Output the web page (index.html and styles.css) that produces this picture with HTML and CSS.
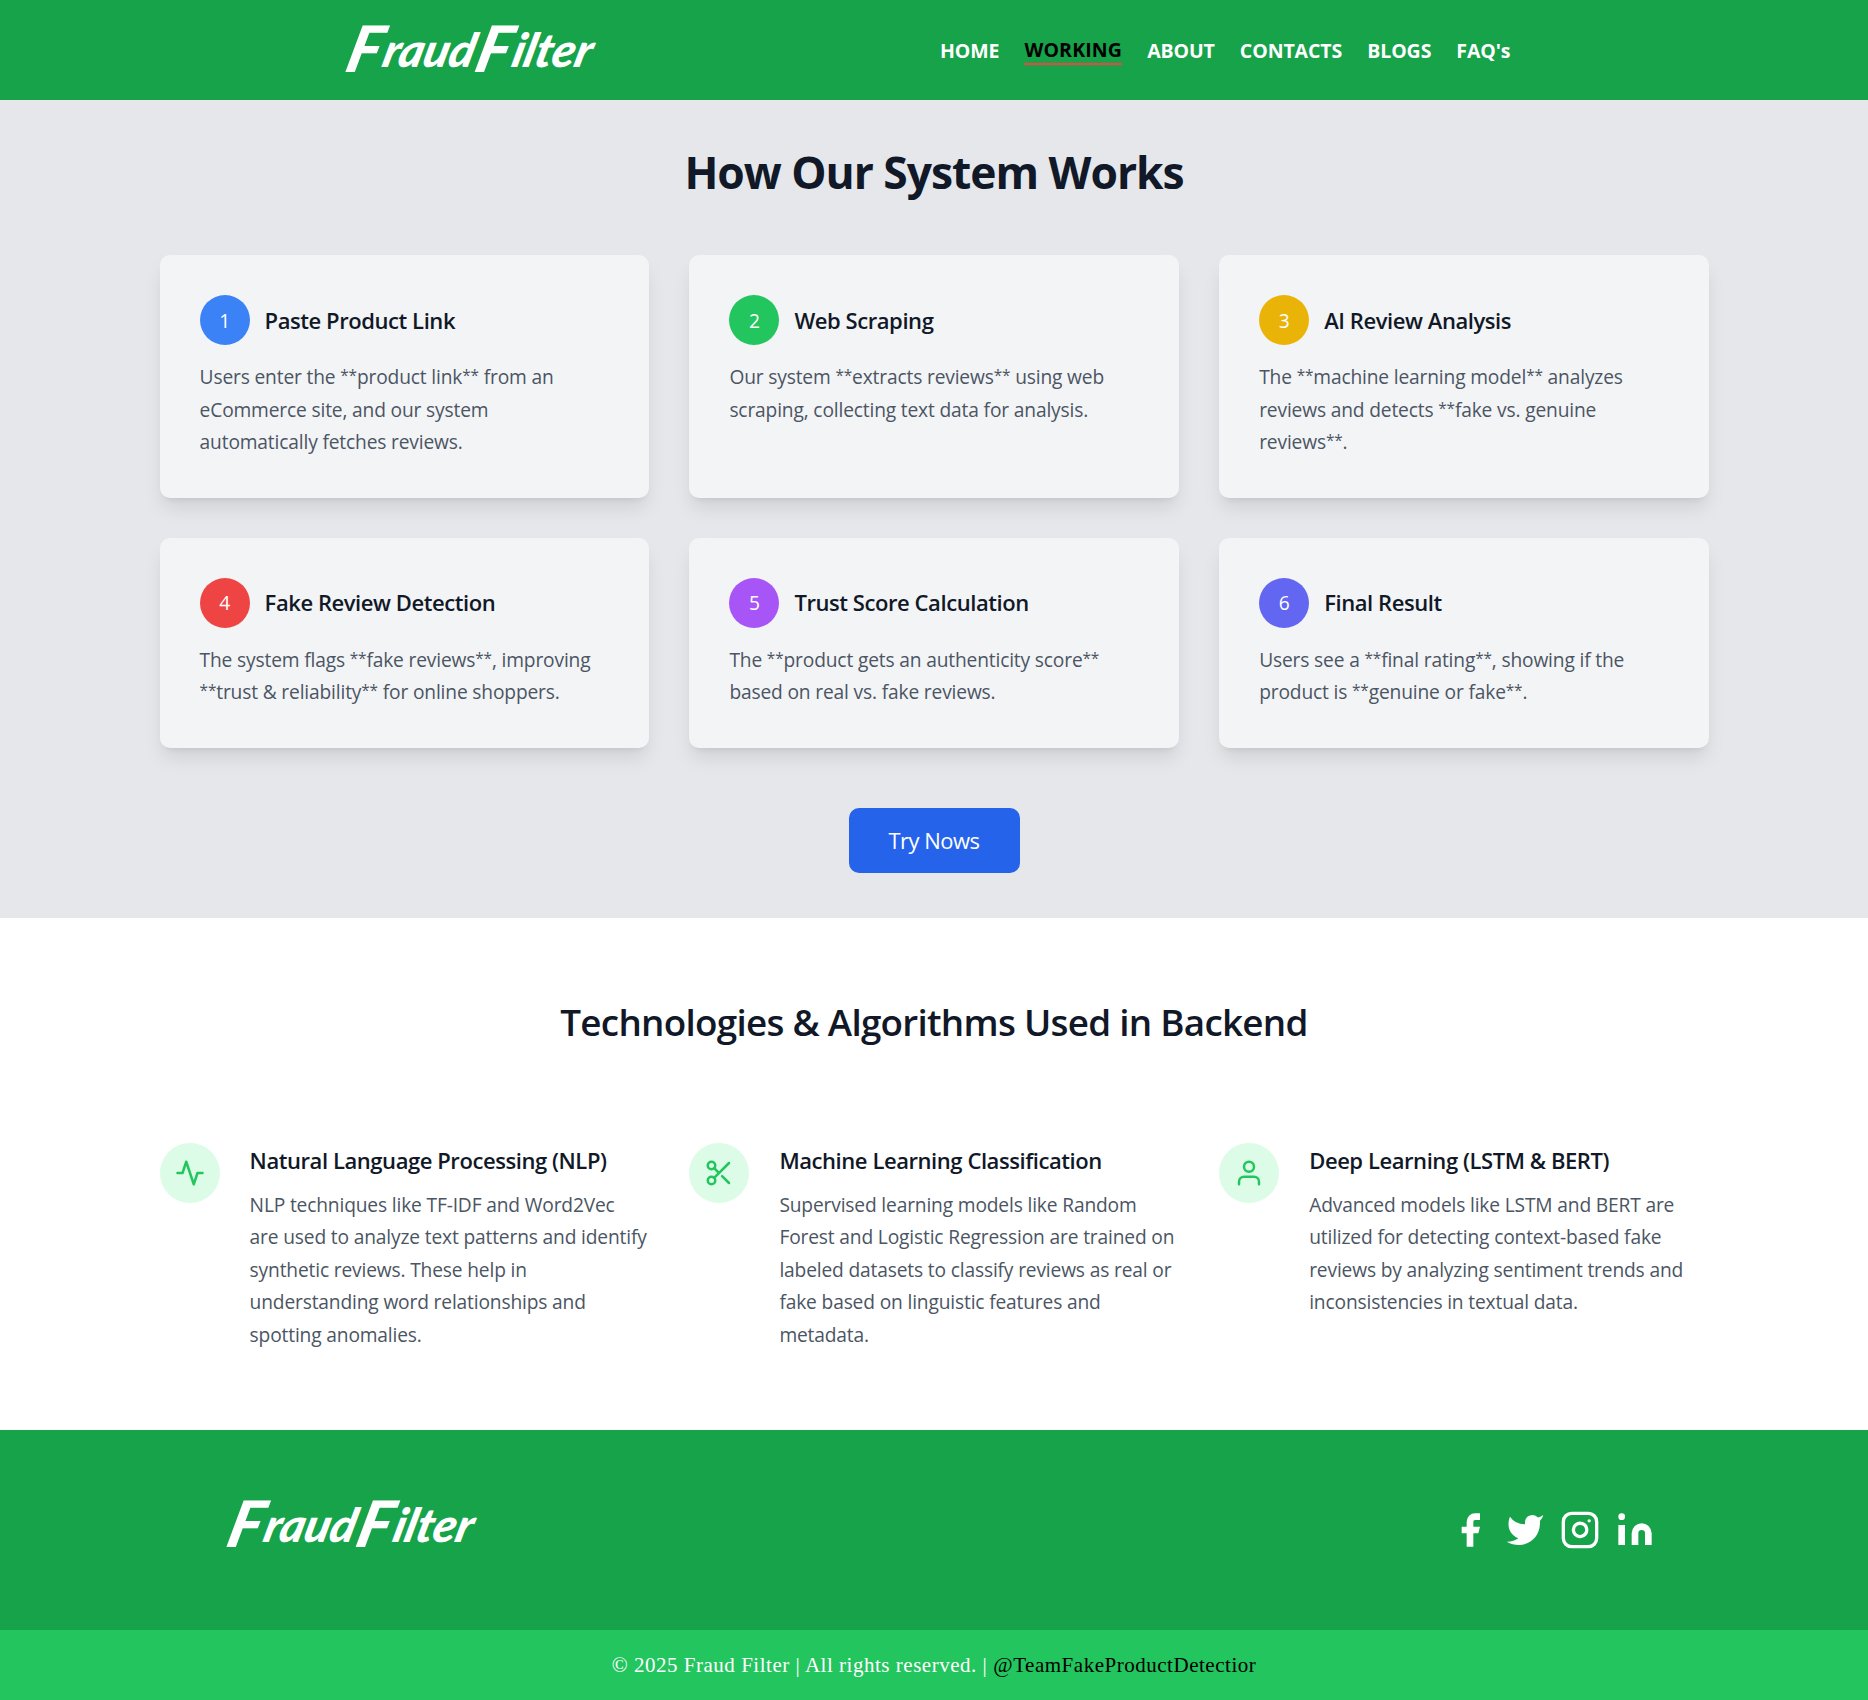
FILE: index.html
```html
<!DOCTYPE html>
<html lang="en">
<head>
<meta charset="utf-8">
<title>Fraud Filter</title>
<link rel="stylesheet" href="styles.css">
</head>
<body>
<header class="header">
  <a class="logo"><span class="cap">F</span>raud<span class="cap second">F</span>ilter</a>
  <nav class="nav">
    <a>HOME</a>
    <a class="active">WORKING</a>
    <a>ABOUT</a>
    <a>CONTACTS</a>
    <a>BLOGS</a>
    <a>FAQ's</a>
  </nav>
</header>

<section class="works">
  <h1>How Our System Works</h1>
  <div class="grid">
    <article class="card">
      <div class="card-head"><span class="num blue">1</span><h2>Paste Product Link</h2></div>
      <p>Users enter the <i>**</i>product link<i>**</i> from an<br>eCommerce site, and our system<br>automatically fetches reviews.</p>
    </article>
    <article class="card">
      <div class="card-head"><span class="num green">2</span><h2>Web Scraping</h2></div>
      <p>Our system <i>**</i>extracts reviews<i>**</i> using web<br>scraping, collecting text data for analysis.</p>
    </article>
    <article class="card">
      <div class="card-head"><span class="num yellow">3</span><h2>AI Review Analysis</h2></div>
      <p>The <i>**</i>machine learning model<i>**</i> analyzes<br>reviews and detects <i>**</i>fake vs. genuine<br>reviews<i>**</i>.</p>
    </article>
    <article class="card">
      <div class="card-head"><span class="num red">4</span><h2>Fake Review Detection</h2></div>
      <p>The system flags <i>**</i>fake reviews<i>**</i>, improving<br><i>**</i>trust &amp; reliability<i>**</i> for online shoppers.</p>
    </article>
    <article class="card">
      <div class="card-head"><span class="num purple">5</span><h2>Trust Score Calculation</h2></div>
      <p>The <i>**</i>product gets an authenticity score<i>**</i><br>based on real vs. fake reviews.</p>
    </article>
    <article class="card">
      <div class="card-head"><span class="num indigo">6</span><h2>Final Result</h2></div>
      <p>Users see a <i>**</i>final rating<i>**</i>, showing if the<br>product is <i>**</i>genuine or fake<i>**</i>.</p>
    </article>
  </div>
  <a class="button">Try Nows</a>
</section>

<section class="tech">
  <h2 class="tech-title">Technologies &amp; Algorithms Used in Backend</h2>
  <div class="grid">
    <article class="feature">
      <div class="badge"><svg viewBox="0 0 24 24"><path d="M22 12h-4l-3 9L9 3l-3 9H2"/></svg></div>
      <div>
        <h3>Natural Language Processing (NLP)</h3>
        <p>NLP techniques like TF-IDF and Word2Vec<br>are used to analyze text patterns and identify<br>synthetic reviews. These help in<br>understanding word relationships and<br>spotting anomalies.</p>
      </div>
    </article>
    <article class="feature">
      <div class="badge"><svg viewBox="0 0 24 24"><circle cx="6" cy="6" r="3"/><circle cx="6" cy="18" r="3"/><path d="M20 4L8.12 15.88M14.47 14.48L20 20M8.12 8.12L12 12"/></svg></div>
      <div>
        <h3>Machine Learning Classification</h3>
        <p>Supervised learning models like Random<br>Forest and Logistic Regression are trained on<br>labeled datasets to classify reviews as real or<br>fake based on linguistic features and<br>metadata.</p>
      </div>
    </article>
    <article class="feature">
      <div class="badge"><svg viewBox="0 0 24 24"><path d="M20 21v-2a4 4 0 00-4-4H8a4 4 0 00-4 4v2"/><circle cx="12" cy="7" r="4"/></svg></div>
      <div>
        <h3>Deep Learning (LSTM &amp; BERT)</h3>
        <p>Advanced models like LSTM and BERT are<br>utilized for detecting context-based fake<br>reviews by analyzing sentiment trends and<br>inconsistencies in textual data.</p>
      </div>
    </article>
  </div>
</section>

<footer>
  <div class="footer-main">
    <a class="logo"><span class="cap">F</span>raud<span class="cap second">F</span>ilter</a>
    <div class="social">
      <svg viewBox="0 0 24 24"><path d="M18 2h-3a5 5 0 00-5 5v3H7v4h3v8h4v-8h3l1-4h-4V7a1 1 0 011-1h3z"/></svg>
      <svg viewBox="0 0 24 24"><path d="M23 3a10.9 10.9 0 01-3.14 1.53 4.48 4.48 0 00-7.86 3v1A10.66 10.66 0 013 4s-4 9 5 13a11.64 11.64 0 01-7 2c9 5 20 0 20-11.5a4.5 4.5 0 00-.08-.83A7.72 7.72 0 0023 3z"/></svg>
      <svg class="outline" viewBox="0 0 24 24"><rect width="20" height="20" x="2" y="2" rx="5"/><path d="M16 11.37A4 4 0 1112.63 8 4 4 0 0116 11.37zm1.5-4.87h.01"/></svg>
      <svg viewBox="0 0 24 24"><path d="M16 8a6 6 0 016 6v7h-4v-7a2 2 0 00-2-2 2 2 0 00-2 2v7h-4v-7a6 6 0 016-6zM2 9h4v12H2z"/><circle cx="4" cy="4" r="2"/></svg>
    </div>
  </div>
  <div class="copyright"><span>© 2025 Fraud Filter | All rights reserved. |</span><a>@TeamFakeProductDetectior</a></div>
</footer>
</body>
</html>
```
FILE: styles.css
```css
* {
  box-sizing: border-box;
  margin: 0;
  padding: 0;
}

body {
  font-family: "Open Sans", "Noto Sans", sans-serif;
  font-size: 19.2px;
  line-height: 32.5px;
  letter-spacing: -0.16px;
  color: #111827;
  background: #fff;
}

.header {
  display: flex;
  align-items: center;
  height: 100px;
  padding: 0 357.5px 0 349px;
  justify-content: space-between;
  background: #16a34a;
}

.logo {
  display: block;
  width: 251px;
  height: 52px;
  font-family: Lato, "Open Sans", sans-serif;
  font-style: italic;
  font-weight: 900;
  font-size: 47px;
  line-height: 52px;
  letter-spacing: -0.2px;
  white-space: nowrap;
  color: #fff;
  transform: skewX(-14deg);
}

.logo .cap {
  display: inline-block;
  width: 36px;
  font-size: 64px;
  line-height: 40px;
  vertical-align: -5px;
}

.logo .second {
  margin-left: 2px;
}

.nav {
  display: flex;
  align-items: center;
  gap: 25px;
  font-size: 19.5px;
  font-weight: 700;
  letter-spacing: -0.08px;
  line-height: 27px;
  color: #fff;
}

.nav .active {
  color: #000;
  border-bottom: 2px solid #ef4444;
  letter-spacing: 0.15px;
}

.works {
  display: flex;
  flex-direction: column;
  align-items: center;
  height: 818px;
  padding-top: 47px;
  background: #e5e7eb;
}

h1 {
  font-size: 44.4px;
  line-height: 50px;
  letter-spacing: -1.03px;
  margin-bottom: 58px;
}

.grid {
  display: grid;
  grid-template-columns: repeat(3, 1fr);
  gap: 40px;
  width: 1549px;
  margin: 0 auto;
}

.works .grid,
.tech .grid {
  width: 1550px;
  padding-left: 0.6px;
}

.card {
  padding: 40px;
  border-radius: 10px;
  background: #f3f4f6;
  box-shadow: 0 12.5px 18.75px -3.75px rgba(0, 0, 0, 0.1), 0 5px 7.5px -5px rgba(0, 0, 0, 0.1);
}

.card-head {
  display: flex;
  align-items: center;
  gap: 15px;
  margin-bottom: 16px;
}

.card p {
  margin-bottom: -1px;
}

.card h2,
.feature h3 {
  font-size: 22px;
  font-weight: 600;
  line-height: 35px;
  letter-spacing: -0.43px;
}

.num {
  display: grid;
  place-items: center;
  width: 50px;
  height: 50px;
  padding-top: 2px;
  border-radius: 50%;
  color: #fff;
}

.blue { background: #3b82f6; }
.green { background: #22c55e; }
.yellow { background: #eab308; }
.red { background: #ef4444; }
.purple { background: #a855f7; }
.indigo { background: #6366f1; }

p {
  color: #4b5563;
  white-space: nowrap;
}

p i {
  font-style: normal;
  font-size: 15.4px;
  line-height: 0;
  letter-spacing: -0.15px;
  vertical-align: 3px;
}

.button {
  width: 171px;
  height: 65px;
  margin-top: 60px;
  border-radius: 10px;
  background: #2563eb;
  color: #fff;
  font-size: 22px;
  line-height: 65px;
  letter-spacing: -0.5px;
  text-align: center;
}

.tech {
  height: 512px;
  padding-top: 82px;
}

.tech-title {
  font-size: 36.8px;
  font-weight: 600;
  line-height: 45px;
  letter-spacing: -0.72px;
  text-align: center;
  margin-bottom: 98px;
}

.feature {
  display: flex;
  gap: 30px;
}

.feature h3 {
  margin-bottom: 10.5px;
}

.badge {
  display: grid;
  place-items: center;
  flex: none;
  width: 60px;
  height: 60px;
  border-radius: 50%;
  background: #dcfce7;
}

.badge svg {
  width: 30px;
  height: 30px;
  fill: none;
  stroke: #22c55e;
  stroke-width: 2;
  stroke-linecap: round;
  stroke-linejoin: round;
}

.footer-main {
  display: flex;
  align-items: center;
  justify-content: space-between;
  height: 200px;
  padding: 0 213px 0 230px;
  background: #16a34a;
}

.footer-main .logo {
  margin-bottom: 12px;
}

.header .logo {
  margin-bottom: 2px;
}

.social {
  display: flex;
  gap: 15px;
}

.social svg {
  width: 40px;
  height: 40px;
  fill: #fff;
}

.social .outline {
  fill: none;
  stroke: #fff;
  stroke-width: 2;
  stroke-linecap: round;
  stroke-linejoin: round;
}

.copyright {
  display: flex;
  justify-content: center;
  gap: 6px;
  height: 70px;
  background: #22c55e;
  font-family: "Liberation Serif", serif;
  font-size: 21px;
  line-height: 70px;
  letter-spacing: 0.52px;
  color: #fff;
}

.copyright a {
  color: #000;
}
```
